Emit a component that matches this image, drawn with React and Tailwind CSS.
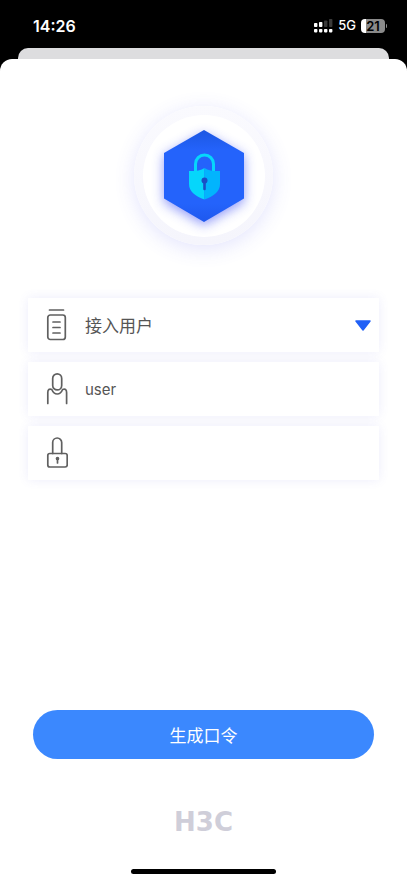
import { useState } from 'react';

function StatusBar() {
  return (
    <header className="flex h-12 items-center justify-between pt-1 pr-5 pl-[33px] font-['Inter',sans-serif] text-white">
      <span className="text-base font-semibold">14:26</span>
      <div className="flex items-center gap-[5px]">
        <svg viewBox="0 0 19 14" className="h-3.5 w-[19px]" aria-hidden="true">
          <g fill="#fff">
            <rect x="0" y="10" width="3.4" height="3.4" rx="0.8" />
            <rect x="5" y="10" width="3.4" height="3.4" rx="0.8" />
            <rect x="10" y="10" width="3.4" height="3.4" rx="0.8" />
            <rect x="15" y="10" width="3.4" height="3.4" rx="0.8" />
            <rect x="0" y="4" width="3.4" height="4" rx="0.8" />
            <rect x="5" y="3" width="3.4" height="5" rx="0.8" />
          </g>
          <g fill="#3a3a3a">
            <rect x="10" y="1.4" width="3.4" height="6.6" rx="0.8" />
            <rect x="15" y="0" width="3.4" height="8" rx="0.8" />
          </g>
        </svg>
        <span className="text-[13px] font-medium">5G</span>
        <div className="flex items-center gap-px">
          <span className="flex h-3.5 w-6 items-center justify-center rounded bg-linear-to-r from-white from-20% to-[#8a8a8a] to-20% text-[13px] leading-none font-semibold text-black">
            21
          </span>
          <span className="h-1 w-px rounded-r bg-[#8a8a8a]" />
        </div>
      </div>
    </header>
  );
}

function ShieldBadge() {
  return (
    <div className="flex size-[139px] items-center justify-center rounded-full bg-linear-to-b from-[#fafafe] to-[#f5f5fc] shadow-[0_4px_20px_rgba(80,90,240,0.16)]">
      <div className="flex size-[122px] items-center justify-center rounded-full bg-white">
        <svg viewBox="0 0 122 122" className="size-full" aria-hidden="true">
          <defs>
            <linearGradient id="hex" x1="0" y1="0" x2="0" y2="1">
              <stop offset="0" stopColor="#1c57e2" />
              <stop offset="0.22" stopColor="#2463fb" />
              <stop offset="0.8" stopColor="#2463fb" />
              <stop offset="1" stopColor="#1e58ee" />
            </linearGradient>
            <filter id="glow" x="-30%" y="-30%" width="160%" height="160%">
              <feGaussianBlur stdDeviation="6" />
            </filter>
          </defs>
          <path d="M61 19 101 41v46L61 110 21 87V41Z" fill="#4757f5" opacity="0.6" filter="url(#glow)" />
          <path d="M61 15 101 38v45.500L61 107 21 83.500V38Z" fill="url(#hex)" />
          <path d="M52.500 56V49a9 9 0 0 1 18 0v7" fill="none" stroke="#06d6fb" strokeWidth="3" />
          <path d="M61.500 53c-4 2.600-9 3.200-15.500 3v13c0 7.500 6 12 15.500 15.500Z" fill="#06d6fb" />
          <path d="M61.500 53c4 2.600 9 3.200 15.500 3v13c0 7.500-6 12-15.500 15.500Z" fill="#02b4fd" />
          <circle cx="61.500" cy="65.500" r="3" fill="#1b4ec5" />
          <path d="M61.500 66v8" stroke="#1b4ec5" strokeWidth="2.600" strokeLinecap="round" />
        </svg>
      </div>
    </div>
  );
}

function FieldIcon({ children }) {
  return (
    <svg
      viewBox="0 0 22 32"
      className="h-8 w-[22px] shrink-0"
      fill="none"
      stroke="#606060"
      strokeWidth="1.700"
      strokeLinecap="round"
      strokeLinejoin="round"
      aria-hidden="true"
    >
      {children}
    </svg>
  );
}

function Field({ icon, children }) {
  return (
    <div className="flex h-[54px] items-center gap-[17px] bg-white pr-2 pl-[18px] shadow-[0_0_10px_rgba(90,90,220,0.11)]">
      <FieldIcon>{icon}</FieldIcon>
      {children}
    </div>
  );
}

const controlClass = 'h-full min-w-0 flex-1 appearance-none bg-transparent text-[#555] outline-none';

function App() {
  const [role, setRole] = useState('access');
  const [user, setUser] = useState('user');
  const [password, setPassword] = useState('');

  return (
    <div className="flex min-h-screen flex-col bg-black font-['Noto_Sans_CJK_SC',sans-serif]">
      <StatusBar />
      <div className="mx-[18px] h-[11px] rounded-t-[10px] bg-[#dddddf]" />
      <main className="flex flex-1 flex-col rounded-t-xl bg-white pt-[47px] pb-[9px]">
        <div className="flex justify-center">
          <ShieldBadge />
        </div>

        <form className="flex flex-1 flex-col pt-[53px]" onSubmit={(e) => e.preventDefault()}>
          <div className="flex flex-col gap-2.5 px-7">
            <Field
              icon={
                <>
                  <path d="M3.500 1h14" />
                  <rect x="1.800" y="6" width="17.500" height="24.500" rx="2.500" />
                  <path d="M7 13h7M7 18.500h7M7 24h7" />
                </>
              }
            >
              <select
                aria-label="用户类型"
                value={role}
                onChange={(e) => setRole(e.target.value)}
                className={`${controlClass} text-[17px]`}
              >
                <option value="access">接入用户</option>
              </select>
              <svg viewBox="0 0 16 11" className="h-[11px] w-4 shrink-0" aria-hidden="true">
                <path d="M1 1h14L8 10Z" fill="#2060f6" stroke="#2060f6" strokeWidth="1.500" strokeLinejoin="round" />
              </svg>
            </Field>
            <Field
              icon={
                <>
                  <rect x="6.700" y="0.900" width="9" height="16" rx="4.500" />
                  <path d="M1.800 30.500V19.500c0-3 1.500-4 4-3 1.200 3 3 4.500 5.400 4.500s4.200-1.500 5.400-4.500c2.500-1 4 0 4 3v11" />
                </>
              }
            >
              <input
                aria-label="用户名"
                value={user}
                onChange={(e) => setUser(e.target.value)}
                className={`${controlClass} font-['Inter',sans-serif] text-[15px]`}
              />
            </Field>
            <Field
              icon={
                <>
                  <path d="M6.700 16.500V5.500a4.500 4.500 0 0 1 9 0v11" />
                  <rect x="1.800" y="16.500" width="19.400" height="13.500" rx="2" />
                  <circle cx="11.500" cy="21.500" r="1" fill="#606060" />
                  <path d="M11.500 22v4" />
                </>
              }
            >
              <input
                type="password"
                aria-label="密码"
                value={password}
                onChange={(e) => setPassword(e.target.value)}
                className={`${controlClass} text-[15px]`}
              />
            </Field>
          </div>

          <div className="mt-auto px-[33px] pt-10">
            <button type="submit" className="h-[49px] w-full rounded-full bg-[#3b88fe] text-[17px] text-white">
              生成口令
            </button>
          </div>
        </form>

        <footer className="flex flex-col items-center gap-[34px] pt-[50px]">
          <span className="font-['DejaVu_Sans',sans-serif] text-[26px] leading-[26px] font-bold text-[#cfced9]">H3C</span>
          <div className="h-[5px] w-[145px] rounded-full bg-black" />
        </footer>
      </main>
    </div>
  );
}

export default App;
